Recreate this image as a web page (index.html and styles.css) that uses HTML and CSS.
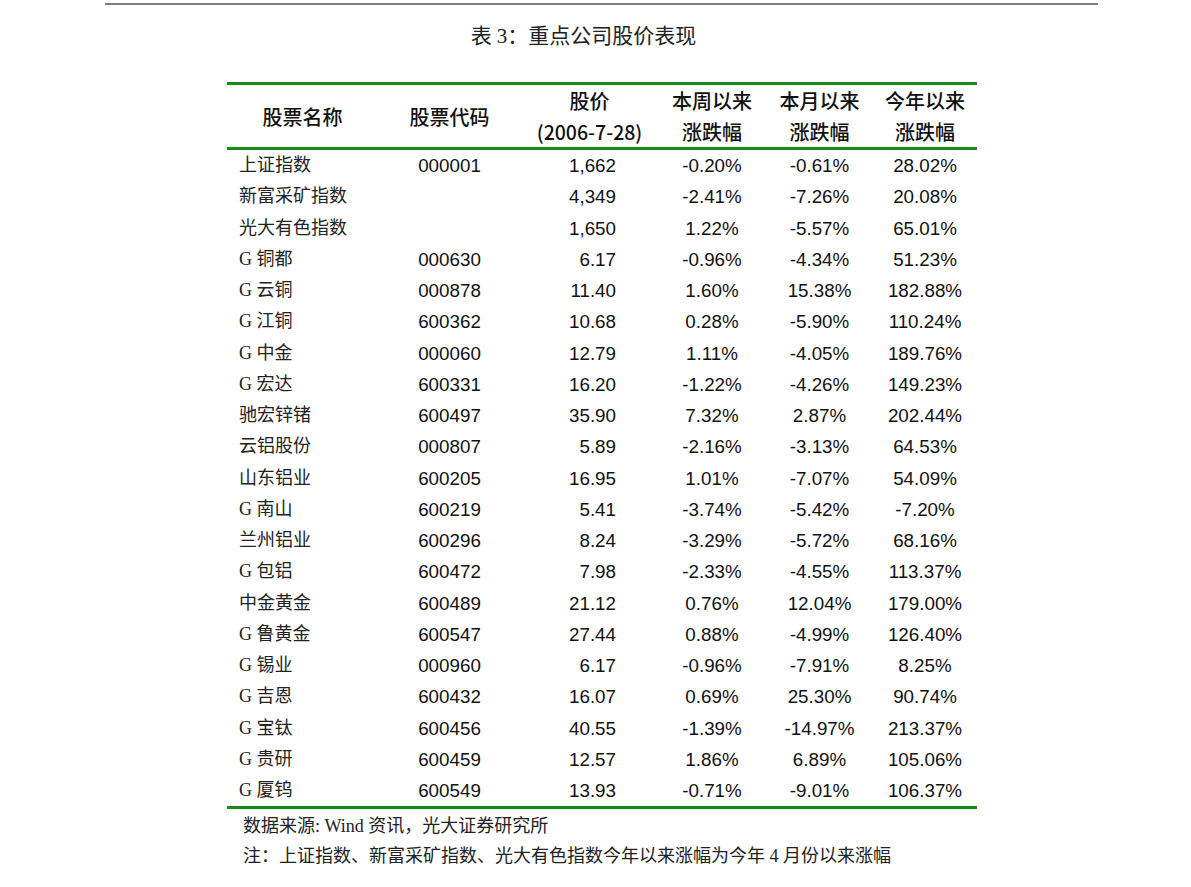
FILE: index.html
```html
<!DOCTYPE html>
<html lang="zh-CN">
<head>
<meta charset="utf-8">
<title>表 3：重点公司股价表现</title>
<link rel="stylesheet" href="styles.css">
</head>
<body>
<div class="page">
  <div class="rule"></div>
  <h1 class="title">表 3：重点公司股价表现</h1>
  <table class="stocks">
    <colgroup>
      <col class="c-name"><col class="c-code"><col class="c-price"><col class="c-wk"><col class="c-mo"><col class="c-yr">
    </colgroup>
    <thead>
      <tr>
        <th>股票名称</th>
        <th>股票代码</th>
        <th>股价<br><span class="date">(2006-7-28)</span></th>
        <th>本周以来<br>涨跌幅</th>
        <th>本月以来<br>涨跌幅</th>
        <th>今年以来<br>涨跌幅</th>
      </tr>
    </thead>
    <tbody>
      <tr><td class="name">上证指数</td><td class="code">000001</td><td class="price">1,662</td><td class="pct">-0.20%</td><td class="pct">-0.61%</td><td class="pct">28.02%</td></tr>
      <tr><td class="name">新富采矿指数</td><td class="code"></td><td class="price">4,349</td><td class="pct">-2.41%</td><td class="pct">-7.26%</td><td class="pct">20.08%</td></tr>
      <tr><td class="name">光大有色指数</td><td class="code"></td><td class="price">1,650</td><td class="pct">1.22%</td><td class="pct">-5.57%</td><td class="pct">65.01%</td></tr>
      <tr><td class="name">G 铜都</td><td class="code">000630</td><td class="price">6.17</td><td class="pct">-0.96%</td><td class="pct">-4.34%</td><td class="pct">51.23%</td></tr>
      <tr><td class="name">G 云铜</td><td class="code">000878</td><td class="price">11.40</td><td class="pct">1.60%</td><td class="pct">15.38%</td><td class="pct">182.88%</td></tr>
      <tr><td class="name">G 江铜</td><td class="code">600362</td><td class="price">10.68</td><td class="pct">0.28%</td><td class="pct">-5.90%</td><td class="pct">110.24%</td></tr>
      <tr><td class="name">G 中金</td><td class="code">000060</td><td class="price">12.79</td><td class="pct">1.11%</td><td class="pct">-4.05%</td><td class="pct">189.76%</td></tr>
      <tr><td class="name">G 宏达</td><td class="code">600331</td><td class="price">16.20</td><td class="pct">-1.22%</td><td class="pct">-4.26%</td><td class="pct">149.23%</td></tr>
      <tr><td class="name">驰宏锌锗</td><td class="code">600497</td><td class="price">35.90</td><td class="pct">7.32%</td><td class="pct">2.87%</td><td class="pct">202.44%</td></tr>
      <tr><td class="name">云铝股份</td><td class="code">000807</td><td class="price">5.89</td><td class="pct">-2.16%</td><td class="pct">-3.13%</td><td class="pct">64.53%</td></tr>
      <tr><td class="name">山东铝业</td><td class="code">600205</td><td class="price">16.95</td><td class="pct">1.01%</td><td class="pct">-7.07%</td><td class="pct">54.09%</td></tr>
      <tr><td class="name">G 南山</td><td class="code">600219</td><td class="price">5.41</td><td class="pct">-3.74%</td><td class="pct">-5.42%</td><td class="pct">-7.20%</td></tr>
      <tr><td class="name">兰州铝业</td><td class="code">600296</td><td class="price">8.24</td><td class="pct">-3.29%</td><td class="pct">-5.72%</td><td class="pct">68.16%</td></tr>
      <tr><td class="name">G 包铝</td><td class="code">600472</td><td class="price">7.98</td><td class="pct">-2.33%</td><td class="pct">-4.55%</td><td class="pct">113.37%</td></tr>
      <tr><td class="name">中金黄金</td><td class="code">600489</td><td class="price">21.12</td><td class="pct">0.76%</td><td class="pct">12.04%</td><td class="pct">179.00%</td></tr>
      <tr><td class="name">G 鲁黄金</td><td class="code">600547</td><td class="price">27.44</td><td class="pct">0.88%</td><td class="pct">-4.99%</td><td class="pct">126.40%</td></tr>
      <tr><td class="name">G 锡业</td><td class="code">000960</td><td class="price">6.17</td><td class="pct">-0.96%</td><td class="pct">-7.91%</td><td class="pct">8.25%</td></tr>
      <tr><td class="name">G 吉恩</td><td class="code">600432</td><td class="price">16.07</td><td class="pct">0.69%</td><td class="pct">25.30%</td><td class="pct">90.74%</td></tr>
      <tr><td class="name">G 宝钛</td><td class="code">600456</td><td class="price">40.55</td><td class="pct">-1.39%</td><td class="pct">-14.97%</td><td class="pct">213.37%</td></tr>
      <tr><td class="name">G 贵研</td><td class="code">600459</td><td class="price">12.57</td><td class="pct">1.86%</td><td class="pct">6.89%</td><td class="pct">105.06%</td></tr>
      <tr><td class="name">G 厦钨</td><td class="code">600549</td><td class="price">13.93</td><td class="pct">-0.71%</td><td class="pct">-9.01%</td><td class="pct">106.37%</td></tr>
    </tbody>
  </table>
  <div class="notes">
    <p>数据来源: Wind 资讯，光大证券研究所</p>
    <p>注：上证指数、新富采矿指数、光大有色指数今年以来涨幅为今年 4 月份以来涨幅</p>
  </div>
</div>
</body>
</html>
```

FILE: styles.css
```css
html, body {
  margin: 0;
  padding: 0;
  background: #ffffff;
  color: #111111;
}

.page {
  padding-top: 3px;
  padding-left: 105px;
  width: 993px;
}

.rule {
  height: 2px;
  background: #7d7d7d;
}

.title {
  margin: 17px 0 0 0;
  padding-right: 36px;
  height: 28px;
  line-height: 28px;
  font-family: "Liberation Serif", "Noto Sans CJK SC", serif;
  font-weight: normal;
  font-size: 21px;
  text-align: center;
  color: #222;
}

.stocks {
  margin-top: 32px;
  margin-left: 122px;
  width: 750px;
  border-collapse: collapse;
  table-layout: fixed;
  border-top: 3px solid #178a17;
  border-bottom: 3px solid #178a17;
}

.c-name { width: 151px; }
.c-code { width: 143px; }
.c-price { width: 137px; }
.c-wk { width: 108px; }
.c-mo { width: 107px; }
.c-yr { width: 104px; }

.stocks thead th {
  padding: 0;
  height: 62px;
  line-height: 31px;
  font-family: "Noto Sans CJK SC", sans-serif;
  font-weight: 500;
  font-size: 20px;
  text-align: center;
  vertical-align: middle;
  color: #111;
  border-bottom: 3px solid #178a17;
}

.stocks thead .date {
  font-size: 19.5px;
}

.stocks td {
  padding: 0;
  height: 31.25px;
  line-height: 31.25px;
  white-space: nowrap;
  font-family: "Liberation Sans", "Noto Sans CJK SC", sans-serif;
  font-size: 18.8px;
  color: #111;
}

.stocks td.name {
  padding-left: 12px;
  text-align: left;
  font-family: "Liberation Serif", "Noto Sans CJK SC", serif;
  font-size: 18px;
  color: #222;
}

.stocks td.code {
  text-align: center;
}

.stocks td.price {
  text-align: right;
  padding-right: 42px;
}

.stocks td.pct {
  text-align: center;
}

.notes {
  margin-left: 138px;
  padding-top: 2px;
}

.notes p {
  margin: 0;
  height: 30px;
  line-height: 30px;
  font-family: "Liberation Serif", "Noto Sans CJK SC", serif;
  font-size: 18px;
  color: #222;
}
```
